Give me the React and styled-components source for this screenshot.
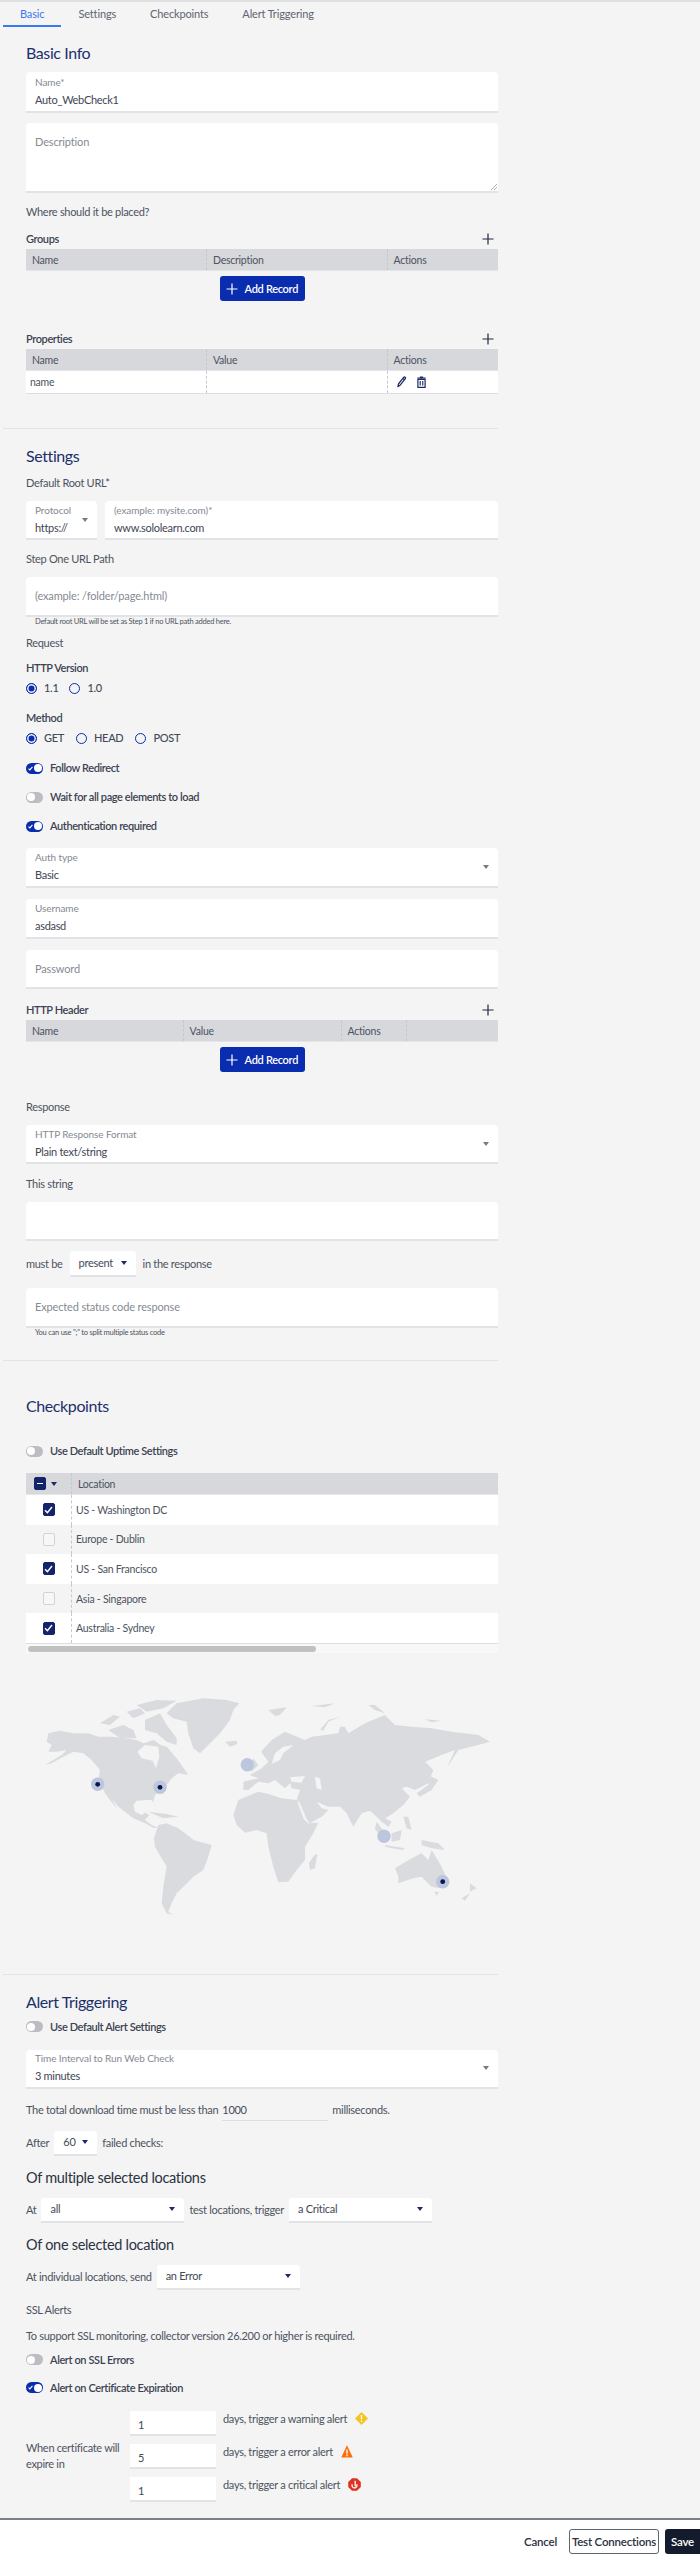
import styled, { createGlobalStyle } from "styled-components";

const GlobalStyle = createGlobalStyle`
	html, body {
		margin: 0;
		padding: 0;
		background: #f4f4f4;
	}
	body {
		font-family: "Lato", "Liberation Sans", sans-serif;
		font-size: 11px;
		letter-spacing: -0.3px;
		line-height: 16px;
		color: #434a57;
	}
`;

const Plus = ({ size = 12, color = "#20283c" }) => (
	<svg width={size} height={size} viewBox="0 0 13 13" fill="none" stroke={color} strokeWidth="1.3">
		<path d="M6.5 0.5v12M0.5 6.5h12" />
	</svg>
);

const PencilIcon = () => (
	<svg width="12" height="12" viewBox="0 0 13 15" fill="none" stroke="#1c2a66" strokeWidth="1.5" strokeLinejoin="round">
		<path d="M2 10l6.6-8.2c.5-.6 1.2-.7 1.8-.2s.7 1.2.2 1.8L4 11.6 1.4 13.4 2 10z" />
		<path d="M7.6 3l2.6 2.1" />
	</svg>
);

const TrashIcon = () => (
	<svg width="11" height="12" viewBox="0 0 11 15">
		<path d="M3.5 0.5h4v1.4h3.2v1.5H.3V1.9h3.2z" fill="#1c2a66" />
		<path d="M1 4.4h9v9.8H1z" fill="none" stroke="#1c2a66" strokeWidth="1.5" />
		<path d="M3.9 6.4v5.6M7.1 6.4v5.6" stroke="#1c2a66" strokeWidth="1.4" />
	</svg>
);

const WarningIcon = () => (
	<svg width="13" height="13" viewBox="0 0 13 13">
		<path d="M6.5 0L13 6.5 6.5 13 0 6.5z" fill="#f4c51f" />
		<path d="M6.5 3v4.4M6.5 8.4v1.5" stroke="#fff" strokeWidth="1.3" />
	</svg>
);

const ErrorIcon = () => (
	<svg width="12" height="13" viewBox="0 0 12 13">
		<path d="M6 0.3L11.8 12.6H0.2z" fill="#f9700a" />
		<path d="M6 4.4v4.4M6 9.6v1.6" stroke="#fff" strokeWidth="1.3" />
	</svg>
);

const CriticalIcon = () => (
	<svg width="13" height="13" viewBox="0 0 13 13">
		<path d="M4 0.2h5l3.8 3.8v5L9 12.8H4L0.2 9V4z" fill="#de3323" />
		<path d="M4.2 6.2a2.5 2.7 0 1 0 4.6 0M7.2 2.8v5.6" fill="none" stroke="#fff" strokeWidth="1.3" />
	</svg>
);

const TickIcon = () => (
	<svg width="9" height="8" viewBox="0 0 9 8" fill="none" stroke="#fff" strokeWidth="1.4">
		<path d="M1 4.2l2.4 2.4L8 1" />
	</svg>
);

const ToggleTick = () => (
	<svg width="5" height="5" viewBox="0 0 9 8" fill="none" stroke="#fff" strokeWidth="2">
		<path d="M1 4.2l2.4 2.4L8 1" />
	</svg>
);

const Page = styled.div`
	width: 700px;
	height: 2560px;
	overflow: hidden;
	background: #f4f4f4;
`;

const TabBar = styled.nav`
	display: flex;
	padding-left: 3px;
	height: 25px;
	border-top: 2px solid #dfe0e2;
`;

const Tab = styled.div`
	padding: 0 17px;
	height: 25px;
	line-height: 23px;
	letter-spacing: -0.15px;
	box-sizing: border-box;
	color: ${(props) => (props.$active ? "#3a78f2" : "#5e6470")};
	border-bottom: 2px solid ${(props) => (props.$active ? "#3a78f2" : "transparent")};
`;

const Section = styled.section`
	width: 472px;
	padding-left: 26px;
`;

const Divider = styled.hr`
	width: 495px;
	height: 1px;
	border: 0;
	background: #e2e3e8;
	margin: ${(props) => props.$top}px 0 0 3px;
`;

const Heading = styled.h2`
	margin: ${(props) => props.$top}px 0 0;
	font-size: 16px;
	letter-spacing: -0.4px;
	line-height: 20px;
	font-weight: 400;
	color: #1d2f6b;
`;

const SubHeading = styled.h3`
	margin: ${(props) => props.$top}px 0 0;
	font-size: 14.5px;
	letter-spacing: -0.3px;
	line-height: 20px;
	font-weight: 400;
	color: #2b3242;
`;

const Text = styled.p`
	margin: ${(props) => props.$top}px 0 0;
	line-height: 16px;
	color: #4c5360;
`;

const Strong = styled(Text)`
	font-weight: 600;
	letter-spacing: -0.4px;
	color: #3c4352;
`;

const TitleRow = styled.div`
	display: flex;
	justify-content: space-between;
	align-items: center;
	height: 16px;
	margin-top: ${(props) => props.$top}px;
	padding-right: 4px;
	font-weight: 600;
	letter-spacing: -0.4px;
	color: #3c4352;
`;

const FieldBox = styled.div`
	display: flex;
	justify-content: space-between;
	align-items: center;
	flex: ${(props) => (props.$w ? `0 0 ${props.$w}px` : "1")};
	box-sizing: border-box;
	height: ${(props) => props.$h || 40}px;
	margin-top: ${(props) => props.$top || 0}px;
	padding: 0 9px;
	background: #fff;
	border-bottom: 2px solid #e1e3e7;
	border-radius: 4px 4px 0 0;
`;

const FieldColumn = styled.div`
	display: flex;
	flex-direction: column;
`;

const FieldLabel = styled.span`
	font-size: 10px;
	letter-spacing: -0.1px;
	line-height: 12px;
	color: #858a93;
`;

const FieldValue = styled.span`
	margin-top: 4px;
	line-height: 16px;
	color: #3f4654;
`;

const Placeholder = styled.span`
	letter-spacing: -0.15px;
	line-height: 16px;
	color: #858a93;
`;

const TextArea = styled(FieldBox)`
	position: relative;
	align-items: flex-start;
	padding-top: 11px;
`;

const Resizer = styled.svg`
	position: absolute;
	right: 1px;
	bottom: 1px;
`;

const Arrow = styled.i`
	display: block;
	flex: none;
	width: 0;
	height: 0;
	border-left: 3px solid transparent;
	border-right: 3px solid transparent;
	border-top: 4px solid ${(props) => (props.$navy ? "#1c2a66" : "#757a85")};
`;

const FieldRow = styled.div`
	display: flex;
	gap: 8px;
	margin-top: ${(props) => props.$top}px;
`;

const Helper = styled.div`
	padding-left: 9px;
	font-size: 7.5px;
	letter-spacing: -0.25px;
	line-height: 10px;
	color: #4c5360;
`;

const Table = styled.div`
	margin-top: 2px;
`;

const HeadRow = styled.div`
	display: grid;
	grid-template-columns: ${(props) => props.$cols};
	height: 22px;
	background: #d7d8dc;
	border-bottom: 1px solid #e4e5e8;
	box-sizing: border-box;
`;

const BodyRow = styled.div`
	display: grid;
	grid-template-columns: ${(props) => props.$cols};
	height: 23px;
	background: #fff;
	border-bottom: 1px solid #dcdee2;
	box-sizing: border-box;
`;

const Cell = styled.div`
	display: flex;
	align-items: center;
	gap: 8px;
	padding-left: ${(props) => props.$pad ?? 6}px;
	font-size: 10.5px;
	letter-spacing: -0.25px;
	color: #4c5360;
	border-left: ${(props) => (props.$first ? "0" : "1px dashed #c6c8cd")};
`;

const AddRecord = styled.button`
	display: flex;
	align-items: center;
	gap: 7px;
	width: 85px;
	height: 25px;
	margin: 5px auto 0;
	padding: 0 0 0 6px;
	border: 0;
	border-radius: 3px;
	background: #0a2cae;
	color: #fff;
	font-family: inherit;
	font-size: 11px;
	font-weight: 600;
	letter-spacing: -0.3px;
	white-space: nowrap;
`;

const RadioGroup = styled.div`
	display: flex;
	align-items: center;
	gap: ${(props) => props.$gap}px;
	height: 16px;
	margin-top: 4px;
`;

const Radio = styled.label`
	display: flex;
	align-items: center;
	gap: 7px;
	font-weight: 500;
	color: #434a57;
`;

const RadioDot = styled.span`
	display: block;
	box-sizing: border-box;
	width: 11px;
	height: 11px;
	border-radius: 50%;
	border: 1.2px solid #0a2cae;
	background: ${(props) => (props.$on ? "#0a2cae" : "transparent")};
	box-shadow: ${(props) => (props.$on ? "inset 0 0 0 1.5px #f4f4f4" : "none")};
`;

const ToggleRow = styled.div`
	display: flex;
	align-items: center;
	gap: 7px;
	height: 16px;
	margin-top: ${(props) => props.$top}px;
	font-weight: 600;
	letter-spacing: -0.4px;
	color: #3c4352;
`;

const ToggleTrack = styled.span`
	display: flex;
	align-items: center;
	justify-content: ${(props) => (props.$on ? "space-between" : "flex-start")};
	box-sizing: border-box;
	width: 17px;
	height: 11px;
	padding: 0 1px 0 ${(props) => (props.$on ? 2 : 1)}px;
	border-radius: 6px;
	background: ${(props) => (props.$on ? "#0a2cae" : "#bcbdc2")};
`;

const ToggleKnob = styled.span`
	display: block;
	width: 8px;
	height: 8px;
	border-radius: 50%;
	background: #fff;
`;

const InlineRow = styled.div`
	display: flex;
	align-items: center;
	gap: ${(props) => props.$gap || 5}px;
	margin-top: ${(props) => props.$top}px;
	color: #4c5360;
`;

const MiniSelect = styled.div`
	display: flex;
	justify-content: space-between;
	align-items: center;
	box-sizing: border-box;
	width: ${(props) => props.$w}px;
	height: ${(props) => props.$h || 25}px;
	padding: 0 9px;
	background: #fff;
	border-bottom: 2px solid #e1e3e7;
	border-radius: 3px 3px 0 0;
	color: #434a57;
`;

const TimeInput = styled.div`
	box-sizing: border-box;
	width: 106px;
	height: 21px;
	line-height: 19px;
	border-bottom: 1px solid #dcdee3;
	color: #434a57;
`;

const Grid = styled.div`
	margin-top: 14px;
`;

const CheckRow = styled.div`
	display: grid;
	grid-template-columns: 45px 1fr;
	height: 29.6px;
	background: ${(props) => (props.$white ? "#fff" : "transparent")};
`;

const CheckCell = styled.div`
	display: flex;
	justify-content: center;
	align-items: center;
`;

const HeadCheckCell = styled.div`
	display: flex;
	align-items: center;
	gap: 5px;
	padding-left: 8px;
`;

const Box = styled.span`
	display: flex;
	justify-content: center;
	align-items: center;
	box-sizing: border-box;
	width: 12px;
	height: 13px;
	border-radius: 2px;
	background: ${(props) => (props.$on ? "#14246b" : "#f7f7f8")};
	border: 1px solid ${(props) => (props.$on ? "#14246b" : "#d2d3d8")};
`;

const Minus = styled.i`
	display: block;
	width: 6px;
	height: 1.5px;
	background: #fff;
`;

const ScrollTrack = styled.div`
	height: 10px;
	padding: 2px 0 0 2px;
	box-sizing: border-box;
	background: #f8f8f8;
	border-top: 1px solid #dcdde0;
`;

const ScrollThumb = styled.div`
	width: 288px;
	height: 6px;
	border-radius: 3px;
	background: #c1c1c1;
`;

const MapSvg = styled.svg`
	display: block;
	margin-top: 37px;
`;

const ExpireBlock = styled.div`
	display: grid;
	grid-template-columns: 104px 1fr;
	align-items: center;
	margin-top: 15px;
`;

const ExpireLabel = styled.div`
	width: 100px;
	color: #4c5360;
`;

const ExpireList = styled.div`
	display: flex;
	flex-direction: column;
	gap: 8px;
`;

const ExpireRow = styled.div`
	display: flex;
	align-items: flex-start;
	gap: 7px;
	color: #4c5360;
`;

const DaysInput = styled.div`
	box-sizing: border-box;
	width: 86px;
	height: 25px;
	padding: 6px 0 0 8px;
	background: #fff;
	border-bottom: 2px solid #e1e3e7;
	color: #434a57;
`;

const DaysText = styled.span`
	display: flex;
	align-items: center;
	gap: 8px;
`;

const Footer = styled.footer`
	display: flex;
	justify-content: flex-end;
	align-items: center;
	box-sizing: border-box;
	height: 42px;
	margin-top: 16px;
	padding-top: 3px;
	background: #fff;
	border-top: 2px solid #7b818c;
`;

const CancelButton = styled.button`
	border: 0;
	padding: 0;
	background: transparent;
	margin-right: 12px;
	font-family: inherit;
	font-size: 11.5px;
	font-weight: 600;
	letter-spacing: -0.2px;
	color: #2a3142;
`;

const TestButton = styled.button`
	width: 90px;
	height: 25px;
	padding: 0;
	margin-right: 6px;
	border: 1px solid #5e6470;
	border-radius: 3px;
	background: #fff;
	font-family: inherit;
	font-size: 11.5px;
	font-weight: 600;
	letter-spacing: -0.2px;
	white-space: nowrap;
	color: #2a3142;
`;

const SaveButton = styled.button`
	width: 35px;
	height: 25px;
	padding: 0;
	border: 0;
	border-radius: 3px 0 0 3px;
	background: #131b2d;
	font-family: inherit;
	font-size: 11.5px;
	font-weight: 600;
	letter-spacing: -0.2px;
	color: #fff;
`;

const Toggle = ({ on, top, children }) => (
	<ToggleRow $top={top}>
		<ToggleTrack $on={on}>
			{on && <ToggleTick />}
			<ToggleKnob />
		</ToggleTrack>
		{children}
	</ToggleRow>
);

const LabelledField = ({ label, value, arrow, top, w, h }) => (
	<FieldBox $top={top} $w={w} $h={h}>
		<FieldColumn>
			<FieldLabel>{label}</FieldLabel>
			<FieldValue>{value}</FieldValue>
		</FieldColumn>
		{arrow && <Arrow />}
	</FieldBox>
);

const Select = ({ w, h, children }) => (
	<MiniSelect $w={w} $h={h}>
		{children}
		<Arrow $navy />
	</MiniSelect>
);

const land = "#d9dbdf";
const paper = "#f4f4f4";

// traced from the picture, in 3x coordinates
const americas = [
	"55,130 90,122 130,130 175,130 205,140 245,140 285,145 320,150 340,160 372,150 392,165 410,170 440,205 465,240 475,255 445,250 425,265 410,285 395,300 375,315 370,335 380,350 365,330 350,330 320,332 310,345 315,365 335,375 345,368 358,375 345,390 365,405 385,413 370,413 345,400 310,385 285,365 265,350 245,325 262,358 240,330 225,310 205,270 210,240 185,210 160,190 130,185 100,200 65,220 45,225 95,195 110,180 80,185 55,185 65,165 50,155",
	"210,100 250,75 270,80 240,105",
	"235,120 280,105 310,120 320,145 270,145",
	"290,65 330,55 345,70 310,85",
	"320,45 380,30 440,32 400,55 350,65",
	"345,90 390,70 410,105 440,145 440,165 410,155 380,130 345,120",
	"410,70 440,40 520,25 590,30 628,40 610,60 600,90 570,130 540,160 510,190 490,175 475,130 470,95 430,85",
	"585,155 620,152 622,162 600,170",
	"355,365 410,372 445,380 400,385",
	"385,405 410,400 445,415 485,445 490,450 545,465 535,500 520,540 490,560 460,590 440,610 425,640 415,665 430,675 410,670 395,640 400,590 410,530 375,470 372,445",
];

const hudson = "322,185 345,165 385,170 388,200 378,235 368,212 335,205";

const oldWorld = [
	"25,375 40,330 100,305 130,312 170,325 215,330 235,385 250,400 280,398 265,430 240,470 240,510 215,540 190,575 160,577 145,530 130,470 125,430 95,420 60,428 35,405",
	"268,495 277,492 270,535 255,540 252,520",
	"55,275 100,265 75,255 110,235 130,215 108,185 140,150 180,125 240,150 260,140 340,130 345,110 360,110 370,130 420,100 480,75 510,105 560,110 620,115 680,125 760,135 795,155 760,165 700,180 665,235 690,180 650,195 600,215 625,240 610,280 570,300 545,290 530,295 555,320 535,345 505,370 480,385 500,395 490,410 470,395 455,380 435,362 410,370 385,410 365,370 345,350 310,350 275,335 290,355 310,360 290,380 255,400 235,375 215,330 225,300 200,295 195,280 180,295 150,270 130,280 100,275 70,300 55,300",
	"85,205 100,225 80,245 72,230",
	"610,255 640,270 620,300 585,320 575,310 610,285",
	"455,395 490,440 470,450 450,415",
	"500,430 530,420 525,450 500,455",
	"480,465 540,475 530,480 480,470",
	"535,380 550,380 560,420 545,415",
	"590,450 640,460 660,480 620,475 590,465",
	"510,535 560,505 590,490 610,510 620,480 650,530 670,575 645,595 620,590 590,560 565,565 520,580 520,560",
	"628,605 642,605 635,618",
	"735,580 755,595 735,605",
	"710,625 735,610 720,632",
	"130,60 185,52 165,75 150,78",
	"285,120 310,90 345,80 310,95 295,122",
	"260,48 330,40 300,52",
	"430,45 450,45 480,70 450,60",
	"600,88 650,92 620,97",
];

const seas = [
	"270,260 285,265 290,300 275,295",
	"195,262 240,258 230,278 200,275",
	"150,190 175,170 205,165 175,190 165,210 140,222",
	"218,335 223,335 248,395 240,392",
];

const pins = [
	{ x: 97.7, y: 94.3, on: true },
	{ x: 160, y: 97.3, on: true },
	{ x: 247.3, y: 74.7 },
	{ x: 384, y: 146.3 },
	{ x: 442.7, y: 191.7, on: true },
];

const WorldMap = () => (
	<MapSvg width="500" height="235" viewBox="0 0 500 235">
		<g transform="translate(30 0) scale(0.3333)">
			{americas.map((p) => (
				<polygon key={p} points={p} fill={land} />
			))}
			<polygon points={hudson} fill={paper} />
		</g>
		<g transform="translate(225 0) scale(0.3333)">
			{oldWorld.map((p) => (
				<polygon key={p} points={p} fill={land} />
			))}
			{seas.map((p) => (
				<polygon key={p} points={p} fill={paper} />
			))}
		</g>
		{pins.map((pin) => (
			<g key={pin.x}>
				<circle cx={pin.x} cy={pin.y} r="6.7" fill="#bcc6dd" />
				{pin.on && <circle cx={pin.x} cy={pin.y} r="2.4" fill="#0a1654" />}
			</g>
		))}
	</MapSvg>
);

const locations = [
	{ name: "US - Washington DC", on: true },
	{ name: "Europe - Dublin" },
	{ name: "US - San Francisco", on: true },
	{ name: "Asia - Singapore" },
	{ name: "Australia - Sydney", on: true },
];

const threeCols = "180px 180.6px 1fr";

const App = () => {
	return (
		<Page>
			<GlobalStyle />
			<TabBar>
				<Tab $active>Basic</Tab>
				<Tab>Settings</Tab>
				<Tab>Checkpoints</Tab>
				<Tab>Alert Triggering</Tab>
			</TabBar>

			<Section>
				<Heading $top={16}>Basic Info</Heading>
				<FieldBox $h={41} $top={9}>
					<FieldColumn>
						<FieldLabel>Name*</FieldLabel>
						<FieldValue>Auto_WebCheck1</FieldValue>
					</FieldColumn>
				</FieldBox>
				<TextArea $h={70} $top={10}>
					<Placeholder>Description</Placeholder>
					<Resizer width="7" height="7" viewBox="0 0 7 7" stroke="#9a9a9a" strokeWidth="0.8">
						<path d="M1 7l6-6M4 7l3-3" />
					</Resizer>
				</TextArea>
				<Text $top={11}>Where should it be placed?</Text>

				<TitleRow $top={11}>
					Groups
					<Plus />
				</TitleRow>
				<Table>
					<HeadRow $cols={threeCols}>
						<Cell $first>Name</Cell>
						<Cell>Description</Cell>
						<Cell>Actions</Cell>
					</HeadRow>
				</Table>
				<AddRecord>
					<Plus color="#fff" />
					Add Record
				</AddRecord>

				<TitleRow $top={30}>
					Properties
					<Plus />
				</TitleRow>
				<Table>
					<HeadRow $cols={threeCols}>
						<Cell $first>Name</Cell>
						<Cell>Value</Cell>
						<Cell>Actions</Cell>
					</HeadRow>
					<BodyRow $cols={threeCols}>
						<Cell $first $pad={4}>
							name
						</Cell>
						<Cell />
						<Cell $pad={8}>
							<PencilIcon />
							<TrashIcon />
						</Cell>
					</BodyRow>
				</Table>
			</Section>

			<Divider $top={34} />

			<Section>
				<Heading $top={17}>Settings</Heading>
				<Text $top={9}>Default Root URL*</Text>
				<FieldRow $top={10}>
					<LabelledField label="Protocol" value="https://" arrow w={71} h={39} />
					<LabelledField label="(example: mysite.com)*" value="www.sololearn.com" h={39} />
				</FieldRow>
				<Text $top={11}>Step One URL Path</Text>
				<FieldBox $top={10}>
					<Placeholder>(example: /folder/page.html)</Placeholder>
				</FieldBox>
				<Helper>Default root URL will be set as Step 1 if no URL path added here.</Helper>

				<Text $top={8}>Request</Text>
				<Strong $top={9}>HTTP Version</Strong>
				<RadioGroup $gap={11}>
					<Radio>
						<RadioDot $on />
						1.1
					</Radio>
					<Radio>
						<RadioDot />
						1.0
					</Radio>
				</RadioGroup>
				<Strong $top={14}>Method</Strong>
				<RadioGroup $gap={12}>
					<Radio>
						<RadioDot $on />
						GET
					</Radio>
					<Radio>
						<RadioDot />
						HEAD
					</Radio>
					<Radio>
						<RadioDot />
						POST
					</Radio>
				</RadioGroup>

				<Toggle on top={14}>
					Follow Redirect
				</Toggle>
				<Toggle top={13}>Wait for all page elements to load</Toggle>
				<Toggle on top={13}>
					Authentication required
				</Toggle>

				<LabelledField label="Auth type" value="Basic" arrow top={14} />
				<LabelledField label="Username" value="asdasd" top={11} />
				<FieldBox $top={11} $h={39}>
					<Placeholder>Password</Placeholder>
				</FieldBox>

				<TitleRow $top={13}>
					HTTP Header
					<Plus />
				</TitleRow>
				<Table>
					<HeadRow $cols="156.6px 158px 65.4px 1fr">
						<Cell $first>Name</Cell>
						<Cell>Value</Cell>
						<Cell>Actions</Cell>
						<Cell />
					</HeadRow>
				</Table>
				<AddRecord>
					<Plus color="#fff" />
					Add Record
				</AddRecord>

				<Text $top={27}>Response</Text>
				<LabelledField label="HTTP Response Format" value="Plain text/string" arrow top={10} h={39} />
				<Text $top={12}>This string</Text>
				<FieldBox $top={10} $h={39} />
				<InlineRow $top={10} $gap={7}>
					must be
					<Select w={66} h={26}>
						present
					</Select>
					in the response
				</InlineRow>
				<FieldBox $top={11}>
					<Placeholder>Expected status code response</Placeholder>
				</FieldBox>
				<Helper>You can use ";" to split multiple status code</Helper>
			</Section>

			<Divider $top={22} />

			<Section>
				<Heading $top={35}>Checkpoints</Heading>
				<Toggle top={27}>Use Default Uptime Settings</Toggle>
				<Grid>
					<HeadRow $cols="45px 1fr">
						<HeadCheckCell>
							<Box $on>
								<Minus />
							</Box>
							<Arrow $navy />
						</HeadCheckCell>
						<Cell>Location</Cell>
					</HeadRow>
					{locations.map((location, i) => (
						<CheckRow key={location.name} $white={i % 2 === 0}>
							<CheckCell>
								<Box $on={location.on}>{location.on && <TickIcon />}</Box>
							</CheckCell>
							<Cell $pad={4}>{location.name}</Cell>
						</CheckRow>
					))}
					<ScrollTrack>
						<ScrollThumb />
					</ScrollTrack>
				</Grid>
			</Section>

			<WorldMap />

			<Divider $top={49} />

			<Section>
				<Heading $top={17}>Alert Triggering</Heading>
				<Toggle top={7}>Use Default Alert Settings</Toggle>
				<LabelledField label="Time Interval to Run Web Check" value="3 minutes" arrow top={15} h={39} />
				<InlineRow $top={11} $gap={4}>
					The total download time must be less than
					<TimeInput>1000</TimeInput>
					milliseconds.
				</InlineRow>
				<InlineRow $top={10}>
					After
					<Select w={43}>60</Select>
					failed checks:
				</InlineRow>
				<SubHeading $top={12}>Of multiple selected locations</SubHeading>
				<InlineRow $top={10}>
					At
					<Select w={143}>all</Select>
					test locations, trigger
					<Select w={143}>a Critical</Select>
				</InlineRow>
				<SubHeading $top={12}>Of one selected location</SubHeading>
				<InlineRow $top={10}>
					At individual locations, send
					<Select w={143}>an Error</Select>
				</InlineRow>
				<Text $top={12}>SSL Alerts</Text>
				<Text $top={10}>To support SSL monitoring, collector version 26.200 or higher is required.</Text>
				<Toggle top={8}>Alert on SSL Errors</Toggle>
				<Toggle on top={12}>
					Alert on Certificate Expiration
				</Toggle>
				<ExpireBlock>
					<ExpireLabel>When certificate will expire in</ExpireLabel>
					<ExpireList>
						<ExpireRow>
							<DaysInput>1</DaysInput>
							<DaysText>
								days, trigger a warning alert
								<WarningIcon />
							</DaysText>
						</ExpireRow>
						<ExpireRow>
							<DaysInput>5</DaysInput>
							<DaysText>
								days, trigger a error alert
								<ErrorIcon />
							</DaysText>
						</ExpireRow>
						<ExpireRow>
							<DaysInput>1</DaysInput>
							<DaysText>
								days, trigger a critical alert
								<CriticalIcon />
							</DaysText>
						</ExpireRow>
					</ExpireList>
				</ExpireBlock>
			</Section>

			<Footer>
				<CancelButton>Cancel</CancelButton>
				<TestButton>Test Connections</TestButton>
				<SaveButton>Save</SaveButton>
			</Footer>
		</Page>
	);
};

export default App;
